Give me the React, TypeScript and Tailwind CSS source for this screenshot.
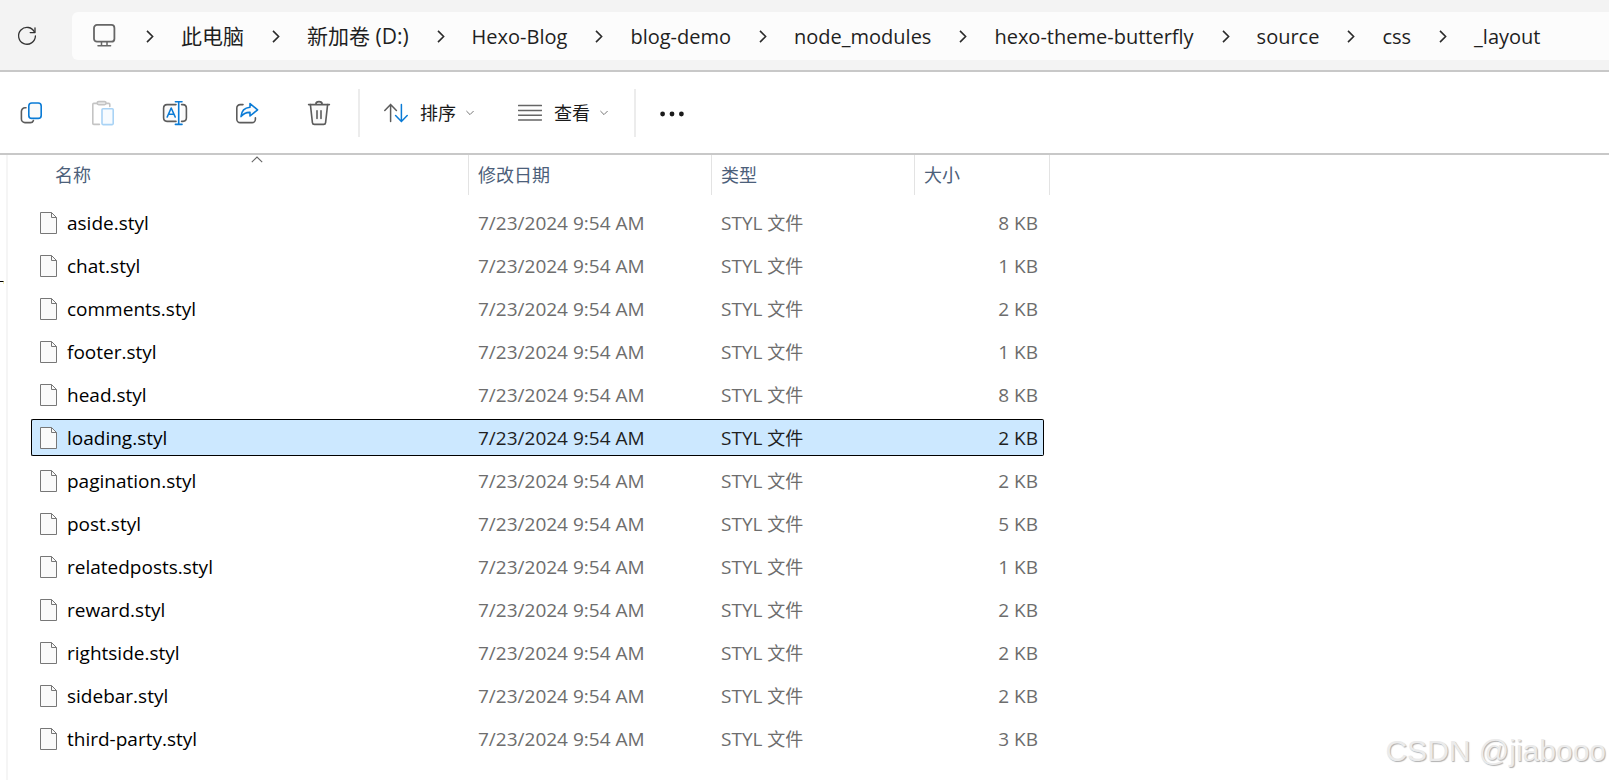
import React from "react";

const crumbs = [
  { label: "此电脑", cjk: true },
  { label: "新加卷 (D:)", cjk: true },
  { label: "Hexo-Blog" },
  { label: "blog-demo" },
  { label: "node_modules" },
  { label: "hexo-theme-butterfly" },
  { label: "source" },
  { label: "css" },
  { label: "_layout" },
];

const files = [
  { name: "aside.styl", size: "8 KB" },
  { name: "chat.styl", size: "1 KB" },
  { name: "comments.styl", size: "2 KB" },
  { name: "footer.styl", size: "1 KB" },
  { name: "head.styl", size: "8 KB" },
  { name: "loading.styl", size: "2 KB", selected: true },
  { name: "pagination.styl", size: "2 KB" },
  { name: "post.styl", size: "5 KB" },
  { name: "relatedposts.styl", size: "1 KB" },
  { name: "reward.styl", size: "2 KB" },
  { name: "rightside.styl", size: "2 KB" },
  { name: "sidebar.styl", size: "2 KB" },
  { name: "third-party.styl", size: "3 KB" },
];

const DARK = "#5c5c5c";
const BLUE = "#0a7bd6";

function Glyph({ size = 32, children }: { size?: number; children: React.ReactNode }) {
  return (
    <svg
      width={size}
      height={size}
      viewBox={`0 0 ${size} ${size}`}
      fill="none"
      strokeWidth="1.6"
      strokeLinecap="round"
      strokeLinejoin="round"
      className="shrink-0"
      aria-hidden="true"
    >
      {children}
    </svg>
  );
}

function RefreshIcon() {
  return (
    <Glyph size={24}>
      <path d="M19.6 8.2A8.4 8.4 0 1 0 20.4 12" stroke="#333" strokeWidth="1.3" />
      <path d="M20 3.8V8.6H15.2" stroke="#333" strokeWidth="1.3" />
    </Glyph>
  );
}

function MonitorIcon() {
  return (
    <Glyph size={24}>
      <rect x="2" y="0.9" width="20.4" height="16.8" rx="3" stroke="#666" strokeWidth="1.8" />
      <path d="M9.5 17.8V21.6M15 17.8V21.6M6 21.8H18.6" stroke="#666" strokeWidth="1.5" />
    </Glyph>
  );
}

function CrumbChevron() {
  return (
    <svg width="8" height="14" viewBox="0 0 8 14" fill="none" className="shrink-0" aria-hidden="true">
      <path d="M1 1.9L6.6 7.5L1 13.1" stroke="#2b2b2b" strokeWidth="1.6" />
    </svg>
  );
}

function SmallChevron() {
  return (
    <svg width="8" height="6" viewBox="0 0 8 6" fill="none" className="shrink-0" aria-hidden="true">
      <path d="M0.4 1L4 4.6L7.6 1" stroke="#777" strokeWidth="1" />
    </svg>
  );
}

function CopyIcon() {
  return (
    <Glyph>
      <path
        d="M11 10.8H10A3.6 3.6 0 0 0 6.4 14.4V22A3.6 3.6 0 0 0 10 25.6H15.4A3.2 3.2 0 0 0 18.4 23.6"
        stroke={DARK}
      />
      <rect x="13.8" y="6" width="12.4" height="15.4" rx="3" fill="#fafafa" stroke={BLUE} />
    </Glyph>
  );
}

function PasteIcon() {
  return (
    <Glyph>
      <path d="M10 6.4H6.8A1 1 0 0 0 5.8 7.4V26.4A1 1 0 0 0 6.8 27.4H12.4M19.2 6.4H21.8A1 1 0 0 1 22.8 7.4V9.4" stroke="#c4c4c4" />
      <rect x="10.2" y="4.6" width="8.8" height="3" rx="1.5" fill="#f5f5f5" stroke="#c4c4c4" />
      <rect x="15" y="11.8" width="11.2" height="15.8" rx="1" fill="#f7fbff" stroke="#a9d3f5" />
    </Glyph>
  );
}

function RenameIcon() {
  return (
    <Glyph>
      <path d="M17 7.6H8A3.6 3.6 0 0 0 4.6 11.2V20.8A3.6 3.6 0 0 0 8 24.4H17" fill="#fafafa" stroke={DARK} />
      <path d="M22.6 7.6H24A3.6 3.6 0 0 1 27.4 11.2V20.8A3.6 3.6 0 0 1 24 24.4H22.6" fill="#fafafa" stroke={DARK} />
      <path d="M16.4 4.8H23M16.4 27.4H23M19.7 4.8V27.4" stroke={BLUE} />
      <path d="M8.2 20L12.2 11L16.2 20M9.6 17.2H14.8" stroke={BLUE} />
    </Glyph>
  );
}

function ShareIcon() {
  return (
    <Glyph>
      <path
        d="M12 7.6H9.2A3.4 3.4 0 0 0 5.8 11V22.2A3.4 3.4 0 0 0 9.2 25.6H21A3.4 3.4 0 0 0 24.4 22.2V20.8"
        stroke={DARK}
      />
      <path
        d="M19 6.6L26.6 12.8L19 19V15.4C15 15.2 12.4 16.6 10 19.6C10.4 14.2 13.6 10.6 19 10.2Z"
        fill="#fafafa"
        stroke={BLUE}
      />
    </Glyph>
  );
}

function TrashIcon() {
  return (
    <Glyph>
      <path d="M7.4 7.6L9.4 25.6A2 2 0 0 0 11.4 27.4H20.6A2 2 0 0 0 22.6 25.6L24.6 7.6" fill="#fafafa" stroke={DARK} />
      <path d="M5.6 7.6H26.4M12.8 7.2C13 3.8 19 3.8 19.2 7.2M14 13.8V21.4M18 13.8V21.4" stroke={DARK} />
    </Glyph>
  );
}

function SortIcon() {
  return (
    <Glyph size={24}>
      <path d="M6.6 20.6V3.4M0.8 9.4L6.6 3.4L12.4 9.4" stroke={DARK} strokeWidth="1.5" />
      <path d="M17.4 3.4V20.6M11.6 14.6L17.4 20.6L23.2 14.6" stroke={BLUE} strokeWidth="1.5" />
    </Glyph>
  );
}

function ViewIcon() {
  return (
    <Glyph size={24}>
      <path d="M0.5 4.6H23.5M0.5 9.4H23.5M0.5 14.2H23.5M0.5 19H23.5" stroke="#666" strokeWidth="1.5" />
    </Glyph>
  );
}

function FileIcon() {
  return (
    <svg width="18" height="22" viewBox="0 0 18 22" fill="none" className="shrink-0" aria-hidden="true">
      <path d="M0.5 0.5H11.5L16.5 5.5V21.5H0.5Z" fill="#fafafa" stroke="#777" />
      <path d="M11.5 0.5V5.5H16.5" stroke="#777" />
    </svg>
  );
}

const tools = [
  { label: "复制", icon: <CopyIcon /> },
  { label: "粘贴", icon: <PasteIcon />, disabled: true },
  { label: "重命名", icon: <RenameIcon /> },
  { label: "共享", icon: <ShareIcon /> },
  { label: "删除", icon: <TrashIcon /> },
];

export default function App() {
  return (
    <div className="relative flex min-h-screen flex-col overflow-hidden bg-white font-['Open_Sans','Noto_Sans_CJK_SC',sans-serif] font-[370] text-black">
      <header className="flex items-center border-b-2 border-[#c8c8c8] bg-[#f3f3f3] pt-3 pb-[10px] pl-[15px]">
        <button type="button" aria-label="刷新" className="mr-[33px]">
          <RefreshIcon />
        </button>
        <nav
          aria-label="路径"
          className="flex h-12 flex-1 items-center rounded-l-md bg-[#fcfcfc] pl-5 text-[20px] whitespace-nowrap text-[#1f1f1f]"
        >
          <a href="#root" aria-label="设备" className="mr-[2px]">
            <MonitorIcon />
          </a>
          {crumbs.map((crumb) => (
            <React.Fragment key={crumb.label}>
              <span className="mr-[27px] ml-7">
                <CrumbChevron />
              </span>
              <a href="#folder" className={crumb.cjk ? "pt-px text-[21px]" : "pt-px"}>
                {crumb.label}
              </a>
            </React.Fragment>
          ))}
        </nav>
      </header>

      <div role="toolbar" className="flex h-[83px] items-center border-b-2 border-[#c8c8c8] pl-[7px] text-[18px] text-[#1a1a1a]">
        <div className="flex gap-6">
          {tools.map((tool) => (
            <button
              key={tool.label}
              type="button"
              aria-label={tool.label}
              disabled={tool.disabled}
              className="flex size-12 items-center justify-center"
            >
              {tool.icon}
            </button>
          ))}
        </div>
        <div className="mr-6 ml-[15px] h-12 w-[2px] bg-[#ececec]" />
        <button type="button" className="mr-11 flex items-center">
          <SortIcon />
          <span className="mr-[10px] ml-3 pt-[2px]">排序</span>
          <SmallChevron />
        </button>
        <button type="button" className="flex items-center">
          <ViewIcon />
          <span className="mr-[10px] ml-3 pt-[2px]">查看</span>
          <SmallChevron />
        </button>
        <div className="mr-6 ml-[26px] h-12 w-[2px] bg-[#ececec]" />
        <button type="button" aria-label="更多" className="pt-[2px]">
          <svg width="24" height="6" viewBox="0 0 24 6" fill="#1a1a1a" aria-hidden="true">
            <circle cx="2.6" cy="3" r="2.4" />
            <circle cx="12" cy="3" r="2.4" />
            <circle cx="21.4" cy="3" r="2.4" />
          </svg>
        </button>
      </div>

      <div className="flex flex-1">
        <aside className="w-2 shrink-0 border-r-2 border-[#f5f5f5] pt-[126px]">
          <div className="h-[3px] w-1 border-t border-r border-t-black border-r-[#f3efae]" />
        </aside>
        <main className="flex-1 pl-[23px]">
          <table className="w-[1019px] table-fixed border-separate border-spacing-0 text-left text-[19px]">
            <colgroup>
              <col className="w-[437px]" />
              <col className="w-[243px]" />
              <col className="w-[203px]" />
              <col className="w-[136px]" />
            </colgroup>
            <thead className="text-[18px] leading-[41px] text-[#4c607a]">
              <tr>
                <th className="p-0 pb-[6px] font-[370]">
                  <div className="relative h-10 pl-6">
                    名称
                    <svg width="12" height="7" viewBox="0 0 12 7" fill="none" className="absolute top-px left-[220px]" aria-hidden="true">
                      <path d="M0.8 6.2L6 1L11.2 6.2" stroke="#666" strokeWidth="1.1" />
                    </svg>
                  </div>
                </th>
                <th className="p-0 pb-[6px] font-[370]">
                  <div className="h-10 border-l border-[#e3e3e3] pl-[9px]">修改日期</div>
                </th>
                <th className="p-0 pb-[6px] font-[370]">
                  <div className="h-10 border-l border-[#e3e3e3] pl-[9px]">类型</div>
                </th>
                <th className="p-0 pb-[6px] font-[370]">
                  <div className="h-10 border-x border-[#e3e3e3] pl-[9px]">大小</div>
                </th>
              </tr>
            </thead>
            <tbody>
              {files.map((file) => {
                const tone = file.selected
                  ? "h-[37px] border-y border-black bg-[#cce8ff] leading-[37px] text-[#1f1f1f]"
                  : "h-[37px] border-y border-transparent leading-[37px] text-[#6d6d6d]";
                return (
                  <tr key={file.name} aria-selected={file.selected ? true : undefined}>
                    <td className="px-0 py-[3px]">
                      <div className={`${tone} flex items-start rounded-l-xs border-l pl-2`}>
                        <span className="flex h-[35px] items-center">
                          <FileIcon />
                        </span>
                        <span className="ml-[9px] text-black">{file.name}</span>
                      </div>
                    </td>
                    <td className="px-0 py-[3px]">
                      <div className={`${tone} pl-[10px]`}>7/23/2024 9:54 AM</div>
                    </td>
                    <td className="px-0 py-[3px]">
                      <div className={`${tone} pl-[10px]`}>
                        STYL <span className="text-[18px]">文件</span>
                      </div>
                    </td>
                    <td className="py-[3px] pr-[6px] pl-0">
                      <div className={`${tone} rounded-r-xs border-r pr-[5px] text-right`}>{file.size}</div>
                    </td>
                  </tr>
                );
              })}
            </tbody>
          </table>
        </main>
      </div>

      <div className="pointer-events-none absolute right-[3px] bottom-[11px] font-['Liberation_Sans',sans-serif] text-[30px] leading-9 text-[#ebebeb] [text-shadow:1px_1px_1px_#b0b0b0]">
        CSDN @jiabooo
      </div>
    </div>
  );
}
